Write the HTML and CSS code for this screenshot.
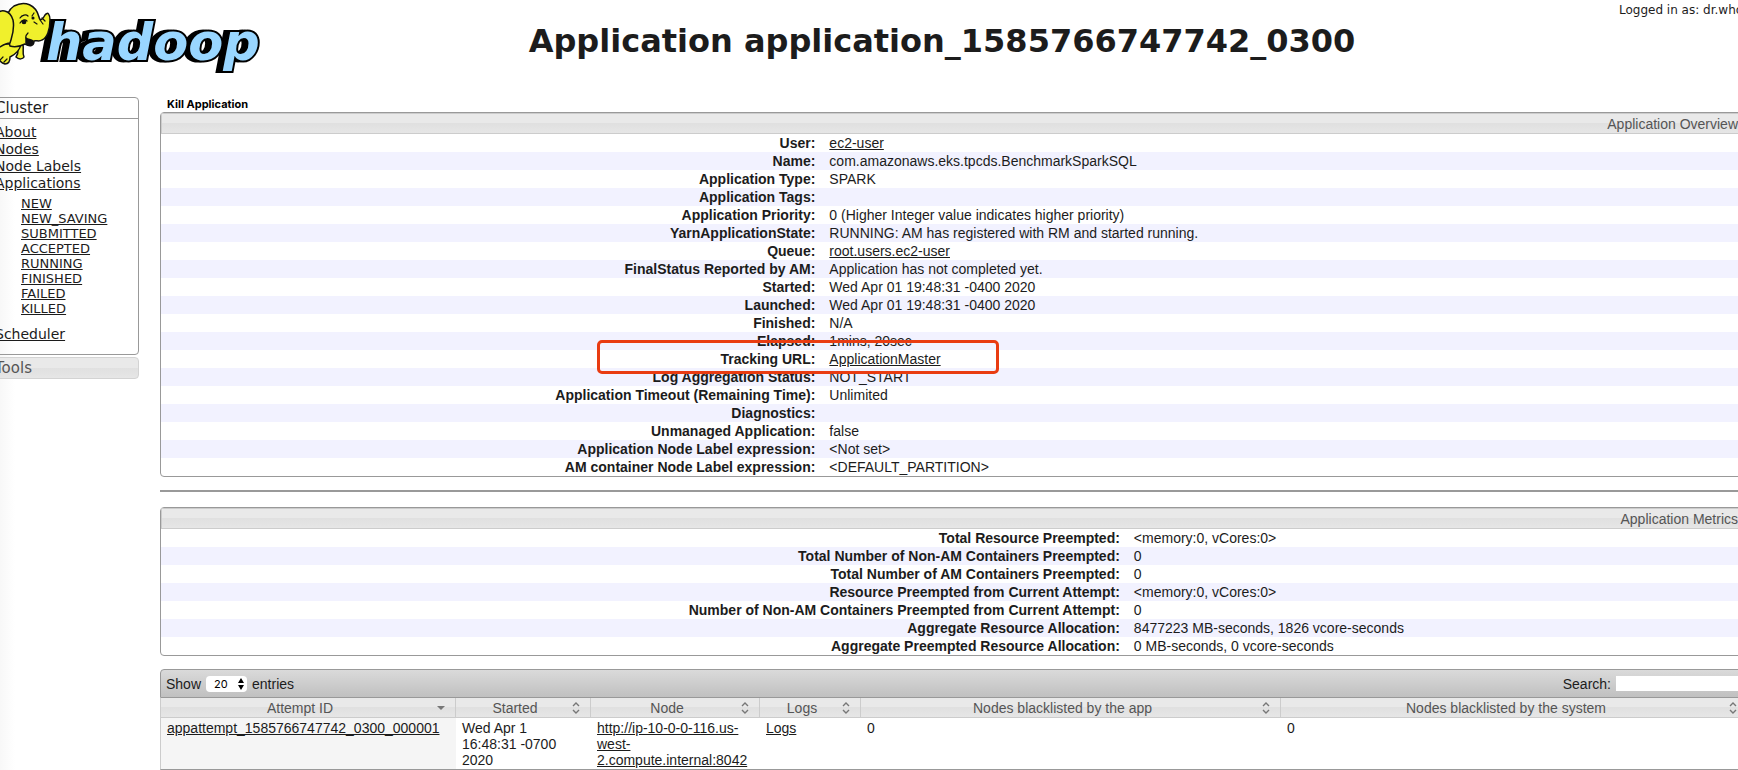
FILE: index.html
```html
<!DOCTYPE html>
<html lang="en">
<head>
  <meta charset="UTF-8">
  <meta name="viewport" content="width=device-width, initial-scale=1.0">
  <title>Application application_1585766747742_0300</title>
  <link rel="stylesheet" href="styles.css">
</head>
<body>
  <div class="page">
    <header class="header">
      <svg class="logo" width="275" height="80" viewBox="0 0 275 80" role="img" aria-label="Hadoop">
        <text class="logo-text" x="56" y="60">hadoop</text>
        <!-- elephant -->
        <g stroke="#111" stroke-width="1.5" stroke-linejoin="round" stroke-linecap="round" fill="#f0f02c">
          <path d="M28 46 C28 51 29 53 26 57 C29 60 33 59 34 57 C32 53 34 49 33 45 Z"/>
          <path d="M8 44 C4 52 8 62 15 64 C19 64 20 60 20 57 C26 54 30 50 31 44 Z"/>
          <path d="M20 46 C16 32 12 14 24 6 C35 0 46 5 49 17 C50 22 53 19 55 15 C58 11 60 15 60 20 C60 30 57 38 52 40 C49 42 46 40 44 41 C44 46 40 47 35 44 C31 46 26 48 20 46 Z"/>
          <path d="M4 17 C10 7 20 10 23 20 C25 30 22 36 20 43 C14 43 10 48 4 50 Z"/>
          <path d="M36 38 C38 40 41 39 43 41 C43 45 40 47 36 43 Z" fill="#111"/>
          <path d="M36 38 C35 36 37 34 38 33 M30 18 C32 15 36 14 38 16 M30 23 C32 20 35 19 37 21 M42 16 L44 13 M44 22 L47 24 M50 20 L53 24 M52 18 L55 21 M10 60 L13 57 M14 62 L17 59" fill="none" stroke-width="1.2"/>
          <circle cx="34" cy="22" r="1.6" fill="#111"/>
          <circle cx="43" cy="18" r="0.8" fill="#111"/>
        </g>
      </svg>
      <h1 class="title">Application application_1585766747742_0300</h1>
      <div class="user">Logged in as: dr.who</div>
    </header>

    <div class="columns">
      <nav class="nav">
        <div class="nav-box">
          <h3 class="nav-title">Cluster</h3>
          <ul class="nav-list">
            <li><a href="#">About</a></li>
            <li><a href="#">Nodes</a></li>
            <li><a href="#">Node Labels</a></li>
            <li><a href="#">Applications</a>
              <ul class="nav-states">
                <li><a href="#">NEW</a></li>
                <li><a href="#">NEW_SAVING</a></li>
                <li><a href="#">SUBMITTED</a></li>
                <li><a href="#">ACCEPTED</a></li>
                <li><a href="#">RUNNING</a></li>
                <li><a href="#">FINISHED</a></li>
                <li><a href="#">FAILED</a></li>
                <li><a href="#">KILLED</a></li>
              </ul>
            </li>
            <li><a href="#">Scheduler</a></li>
          </ul>
        </div>
        <h3 class="nav-tools">Tools</h3>
      </nav>

      <main class="content">
        <button class="kill" type="button">Kill Application</button>

        <table class="info overview">
          <thead>
            <tr><th class="info-title" colspan="2">Application Overview</th></tr>
          </thead>
          <tbody>
            <tr><th>User:</th><td><a href="#">ec2-user</a></td></tr>
            <tr><th>Name:</th><td>com.amazonaws.eks.tpcds.BenchmarkSparkSQL</td></tr>
            <tr><th>Application Type:</th><td>SPARK</td></tr>
            <tr><th>Application Tags:</th><td></td></tr>
            <tr><th>Application Priority:</th><td>0 (Higher Integer value indicates higher priority)</td></tr>
            <tr><th>YarnApplicationState:</th><td>RUNNING: AM has registered with RM and started running.</td></tr>
            <tr><th>Queue:</th><td><a href="#">root.users.ec2-user</a></td></tr>
            <tr><th>FinalStatus Reported by AM:</th><td>Application has not completed yet.</td></tr>
            <tr><th>Started:</th><td>Wed Apr 01 19:48:31 -0400 2020</td></tr>
            <tr><th>Launched:</th><td>Wed Apr 01 19:48:31 -0400 2020</td></tr>
            <tr><th>Finished:</th><td>N/A</td></tr>
            <tr><th>Elapsed:</th><td>1mins, 20sec</td></tr>
            <tr><th>Tracking URL:</th><td class="marked"><a href="#">ApplicationMaster</a><span class="marker"></span></td></tr>
            <tr><th>Log Aggregation Status:</th><td>NOT_START</td></tr>
            <tr><th>Application Timeout (Remaining Time):</th><td>Unlimited</td></tr>
            <tr><th>Diagnostics:</th><td></td></tr>
            <tr><th>Unmanaged Application:</th><td>false</td></tr>
            <tr><th>Application Node Label expression:</th><td>&lt;Not set&gt;</td></tr>
            <tr><th>AM container Node Label expression:</th><td>&lt;DEFAULT_PARTITION&gt;</td></tr>
          </tbody>
        </table>

        <hr class="divider">

        <table class="info metrics">
          <thead>
            <tr><th class="info-title" colspan="2">Application Metrics</th></tr>
          </thead>
          <tbody>
            <tr><th>Total Resource Preempted:</th><td>&lt;memory:0, vCores:0&gt;</td></tr>
            <tr><th>Total Number of Non-AM Containers Preempted:</th><td>0</td></tr>
            <tr><th>Total Number of AM Containers Preempted:</th><td>0</td></tr>
            <tr><th>Resource Preempted from Current Attempt:</th><td>&lt;memory:0, vCores:0&gt;</td></tr>
            <tr><th>Number of Non-AM Containers Preempted from Current Attempt:</th><td>0</td></tr>
            <tr><th>Aggregate Resource Allocation:</th><td>8477223 MB-seconds, 1826 vcore-seconds</td></tr>
            <tr><th>Aggregate Preempted Resource Allocation:</th><td>0 MB-seconds, 0 vcore-seconds</td></tr>
          </tbody>
        </table>

        <div class="toolbar">
          <div class="length">
            <label for="length">Show</label>
            <span class="select-wrap">
              <select id="length">
                <option>20</option>
                <option>40</option>
                <option>60</option>
              </select>
              <svg width="6" height="12" viewBox="0 0 6 12"><path d="M3 0 L6 5 H0 Z M0 7 H6 L3 12 Z"/></svg>
            </span>
            <span>entries</span>
          </div>
          <div class="search">
            <label for="search">Search:</label>
            <input id="search" type="text">
          </div>
        </div>

        <table class="attempts">
          <colgroup>
            <col class="col-id">
            <col class="col-started">
            <col class="col-node">
            <col class="col-logs">
            <col class="col-app">
            <col>
          </colgroup>
          <thead>
            <tr>
              <th><div class="head"><span>Attempt ID</span><svg class="sort" width="16" height="16" viewBox="0 0 16 16"><path class="solid" d="M4 6 H12 L8 10 Z"/></svg></div></th>
              <th><div class="head"><span>Started</span><svg class="sort" width="16" height="16" viewBox="0 0 16 16"><path d="M5 6 L8 3 L11 6 M5 10 L8 13 L11 10"/></svg></div></th>
              <th><div class="head"><span>Node</span><svg class="sort" width="16" height="16" viewBox="0 0 16 16"><path d="M5 6 L8 3 L11 6 M5 10 L8 13 L11 10"/></svg></div></th>
              <th><div class="head"><span>Logs</span><svg class="sort" width="16" height="16" viewBox="0 0 16 16"><path d="M5 6 L8 3 L11 6 M5 10 L8 13 L11 10"/></svg></div></th>
              <th><div class="head"><span>Nodes blacklisted by the app</span><svg class="sort" width="16" height="16" viewBox="0 0 16 16"><path d="M5 6 L8 3 L11 6 M5 10 L8 13 L11 10"/></svg></div></th>
              <th><div class="head"><span>Nodes blacklisted by the system</span><svg class="sort" width="16" height="16" viewBox="0 0 16 16"><path d="M5 6 L8 3 L11 6 M5 10 L8 13 L11 10"/></svg></div></th>
            </tr>
          </thead>
          <tbody>
            <tr>
              <td class="sorted"><a href="#">appattempt_1585766747742_0300_000001</a></td>
              <td>Wed Apr 1 16:48:31 -0700 2020</td>
              <td><a href="#">http://ip-10-0-0-116.us-west-2.compute.internal:8042</a></td>
              <td><a href="#">Logs</a></td>
              <td>0</td>
              <td>0</td>
            </tr>
          </tbody>
        </table>
      </main>
    </div>
  </div>
</body>
</html>
```
FILE: styles.css
```css
* {
    margin: 0;
    padding: 0;
    box-sizing: border-box;
}

body {
    font-family: "Liberation Sans", Arial, sans-serif;
    font-size: 14px;
    line-height: 16px;
    color: #1c1c1c;
    background: linear-gradient(to right, #f8f8f8, #fff 15px);
    overflow: hidden;
}

a {
    color: inherit;
    text-decoration: underline;
}

/* wider than the window, the edges are cut off on both sides */
.page {
    margin: 0 -10px;
}

.header {
    display: flex;
    align-items: flex-start;
    height: 97px;
}

.logo {
    flex: none;
}

.logo-text {
    font: italic bold 51px "DejaVu Sans", Verdana, sans-serif;
    fill: #99d6ff;
    stroke: #000;
    stroke-width: 4px;
    paint-order: stroke;
    filter: drop-shadow(-5px 0 0 #000);
}

.title {
    flex: 1;
    padding-top: 22px;
    font-family: "DejaVu Sans", Verdana, sans-serif;
    font-size: 32px;
    line-height: 38px;
    text-align: center;
    white-space: nowrap;
}

.user {
    width: 129px;
    padding-top: 2px;
    font-family: "DejaVu Sans", Verdana, sans-serif;
    font-size: 12px;
    white-space: nowrap;
}

.columns {
    display: flex;
    align-items: flex-start;
    gap: 21px;
}

.nav {
    flex: none;
    width: 149px;
    font-family: "DejaVu Sans", Verdana, sans-serif;
}

.nav-box {
    border: 1px solid #999;
    border-radius: 4px;
    padding-bottom: 6px;
}

.nav-title,
.nav-tools {
    padding: 0 4px;
    font-size: 15px;
    font-weight: normal;
    line-height: 20px;
}

.nav-title {
    border-bottom: 1px solid #999;
}

.nav-tools {
    margin-top: 2px;
    border: 1px solid #d3d3d3;
    border-radius: 4px;
    background: linear-gradient(#e9e9e9 50%, #e0e0e0 50%, #e6e6e6);
    color: #555;
}

.nav-list {
    padding: 5px 4px;
    list-style: none;
    font-size: 14px;
    line-height: 17px;
}

.nav-states {
    padding: 4px 0 10px 26px;
    list-style: none;
    font-size: 13px;
    line-height: 15px;
}

.content {
    flex: 1;
    min-width: 0;
}

.kill {
    display: block;
    padding-left: 7px;
    border: none;
    background: none;
    font-family: Inter, sans-serif;
    font-size: 11px;
    font-weight: 700;
    line-height: 15px;
    color: #000;
}

.info {
    width: 100%;
    border: 1px solid #999;
    border-radius: 4px;
    border-spacing: 0;
}

.info th,
.info td {
    padding: 1px 7px;
    text-align: left;
}

.info tbody th {
    text-align: right;
}

.info .info-title {
    padding: 2px 8px 0;
    border: 1px solid #ccc;
    background: linear-gradient(#e9e9e9 50%, #e0e0e0 50%, #e6e6e6);
    color: #555;
    font-weight: normal;
    line-height: 17px;
    text-align: right;
}

.info tbody tr {
    height: 18px;
}

.info tbody tr:nth-child(even) {
    background: #f2f2ff;
}

.overview tbody th {
    width: 41.7%;
}

.metrics tbody th {
    width: 60.9%;
}

.marked {
    position: relative;
}

/* frame round the tracking link */
.marker {
    position: absolute;
    top: -10px;
    left: -225px;
    width: 402px;
    height: 34px;
    border: 3px solid #e93c12;
    border-radius: 5px;
}

.divider {
    height: 2px;
    margin: 13px 0 15px;
    border: none;
    background: #999;
}

.toolbar {
    display: flex;
    justify-content: space-between;
    align-items: center;
    height: 29px;
    margin-top: 13px;
    padding: 0 5px;
    border: 1px solid #999;
    border-radius: 4px 4px 0 0;
    background: linear-gradient(#dadada, #c0c0c0);
}

.length,
.search {
    display: flex;
    align-items: center;
    gap: 5px;
}

.select-wrap {
    position: relative;
}

.select-wrap select {
    display: block;
    width: 41px;
    height: 16px;
    padding-left: 8px;
    border: none;
    border-radius: 4px;
    appearance: none;
    background: #fff;
    font-family: Inter, sans-serif;
    font-size: 11px;
    color: #000;
}

.select-wrap svg {
    position: absolute;
    top: 2px;
    right: 3px;
}

.search input {
    width: 126px;
    height: 15px;
    border: none;
    background: #fff;
}

.attempts {
    width: 100%;
    table-layout: fixed;
    border-spacing: 0;
    border-left: 1px solid #ccc;
    border-bottom: 1px solid #999;
}

.col-id {
    width: 295px;
}

.col-started {
    width: 135px;
}

.col-node {
    width: 169px;
}

.col-logs {
    width: 101px;
}

.col-app {
    width: 420px;
}

.attempts th {
    padding: 1px 6px;
    border-right: 1px solid #ccc;
    border-bottom: 1px solid #ccc;
    background: linear-gradient(#e9e9e9 50%, #e0e0e0 50%, #e6e6e6);
    color: #555;
    font-weight: normal;
}

.head {
    display: flex;
    align-items: center;
    height: 17px;
}

.head span {
    flex: 1;
}

.sort {
    fill: none;
    stroke: #777;
    stroke-width: 1.4;
}

.sort .solid {
    fill: #777;
    stroke: none;
}

.attempts td {
    padding: 2px 6px 1px;
    vertical-align: top;
}

.attempts .sorted {
    background: #f5f5f5;
}
```
